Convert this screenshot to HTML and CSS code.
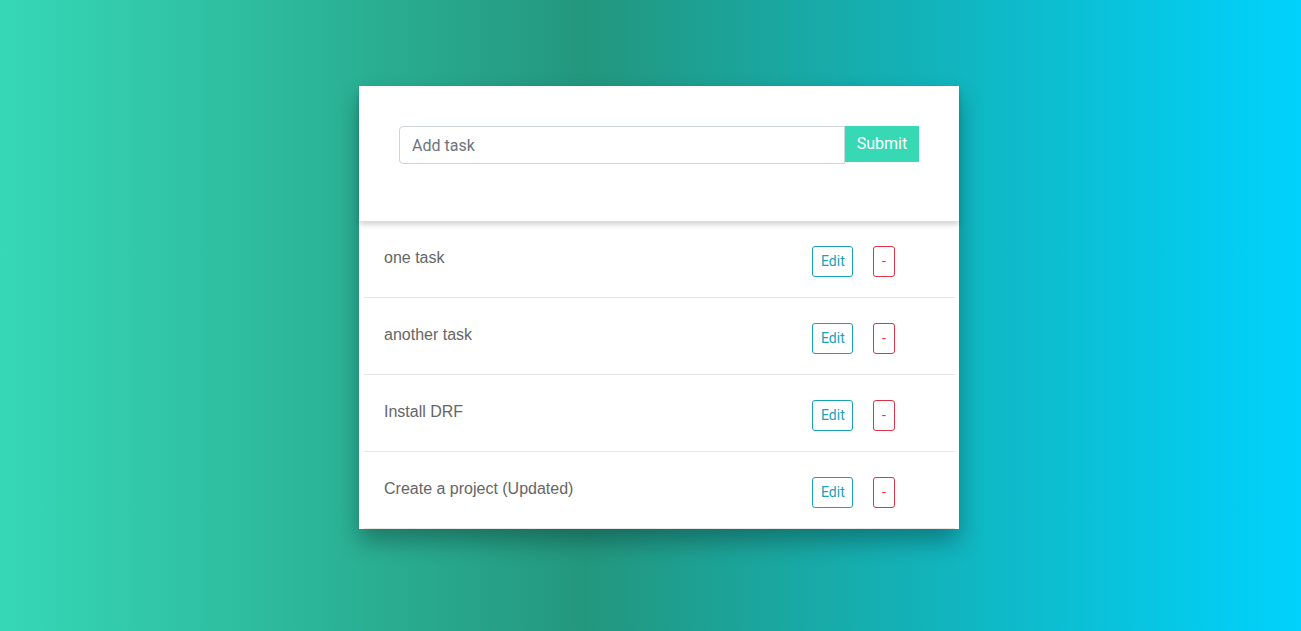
FILE: index.html
```html
<!DOCTYPE html>
<html>
<head>
<meta charset="utf-8">
<link rel="stylesheet" href="styles.css">
</head>
<body>
<div class="page">
  <div class="card">
    <div class="card-head">
      <form class="add-form">
        <input class="add-input" type="text" placeholder="Add task">
        <button class="submit-btn" type="button">Submit</button>
      </form>
    </div>
    <div class="list">
      <div class="row">
        <span class="task">one task</span>
        <div class="actions">
          <button class="btn btn-edit">Edit</button>
          <button class="btn btn-del">-</button>
        </div>
      </div>
      <div class="row">
        <span class="task">another task</span>
        <div class="actions">
          <button class="btn btn-edit">Edit</button>
          <button class="btn btn-del">-</button>
        </div>
      </div>
      <div class="row">
        <span class="task">Install DRF</span>
        <div class="actions">
          <button class="btn btn-edit">Edit</button>
          <button class="btn btn-del">-</button>
        </div>
      </div>
      <div class="row">
        <span class="task">Create a project (Updated)</span>
        <div class="actions">
          <button class="btn btn-edit">Edit</button>
          <button class="btn btn-del">-</button>
        </div>
      </div>
    </div>
  </div>
</div>
</body>
</html>
```
FILE: styles.css
```css
* { box-sizing: border-box; }
html, body { margin: 0; padding: 0; height: 100%; }
body {
  font-family: Roboto, "Liberation Sans", sans-serif;
  background: linear-gradient(to right, #36d8b7 0%, #23977e 45%, #00d2fd 100%);
  min-height: 631px;
}
.page {
  display: flex;
  justify-content: center;
  padding-top: 86px;
  padding-left: 17px;
}
.card {
  width: 600px;
  background: #fff;
  box-shadow: 0 12px 22px rgba(0, 0, 0, 0.3);
}
.card-head {
  position: relative;
  z-index: 1;
  background: #fff;
  padding: 40px 40px 41px 40px;
  box-shadow: 0 4px 5px rgba(0, 0, 0, 0.16);
}
.add-form {
  display: flex;
  align-items: flex-start;
  margin: 0 0 16px 0;
}
.add-input {
  flex: 1;
  height: 38px;
  border: 1px solid #ced4da;
  border-radius: 4px 0 0 4px;
  padding: 6px 12px;
  font-family: Roboto, sans-serif;
  font-size: 16px;
  color: #495057;
  outline: none;
}
.add-input::placeholder { color: #6c757d; }
.submit-btn {
  width: 74px;
  height: 36px;
  border: none;
  background: #37d9b5;
  color: #fff;
  font-family: Roboto, sans-serif;
  font-size: 16px;
  line-height: 24px;
  padding: 6px 0;
}
.list {
  padding: 0 4px 0 5px;
}
.row {
  display: flex;
  justify-content: space-between;
  align-items: flex-start;
  padding: 25px 60px 20px 20px;
  border-bottom: 1px solid #e6e6e6;
}
.task {
  font-family: "Liberation Sans", Arial, sans-serif;
  font-size: 16px;
  line-height: 24px;
  color: #666;
}
.actions {
  display: flex;
  gap: 20px;
}
.btn {
  font-family: Roboto, sans-serif;
  font-size: 14px;
  line-height: 21px;
  height: 31px;
  padding: 4px 8px;
  background: #fff;
  border-radius: 3px;
  border: 1px solid;
}
.btn-edit { color: #17a2b8; border-color: #17a2b8; width: 41px; }
.btn-del { color: #dc3545; border-color: #dc3545; width: 22px; padding: 4px 0; }
```
